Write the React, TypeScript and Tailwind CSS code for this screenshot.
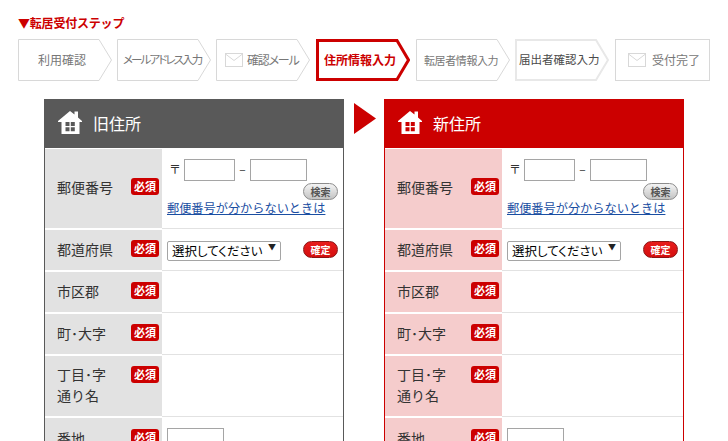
import React from 'react';

const steps = [
  { label: '利用確認', cell: 'w-[99px]', text: 'text-[12px] pl-[20px]' },
  { label: 'メールアドレス入力', cell: 'w-[99px]', text: 'text-[11.5px] pl-[6px] tracking-[-1.9px]' },
  { label: '確認メール', cell: 'w-[100px]', text: 'text-[12px] pl-[9px] tracking-[-1.2px]', mail: true },
  { label: '住所情報入力', cell: 'w-[100px]', text: 'text-[12px] pl-[8px] font-bold', active: true },
  { label: '転居者情報入力', cell: 'w-[99px]', text: 'text-[11px] pl-[8px] tracking-[-0.4px]' },
  { label: '届出者確認入力', cell: 'w-[100px]', text: 'text-[11.5px] pl-[4px] text-[#4a4a4a]', current: true },
];

const MailIcon: React.FC = () => (
  <svg width="18" height="14" viewBox="0 0 18 14" className="mr-[4px] shrink-0">
    <rect x="0.5" y="0.5" width="17" height="13" fill="#fff" stroke="#d8d8d8" />
    <path d="M0.5 1 L9 7.5 L17.5 1" fill="none" stroke="#d8d8d8" />
  </svg>
);

const HomeIcon: React.FC = () => (
  <svg width="24" height="24" viewBox="0 0 24 24" className="shrink-0">
    <path
      fillRule="evenodd"
      fill="#fff"
      d="M12 0 L16.5 3.5 V0.5 H20 V6.5 L24 10 V11 H21.5 V23 H3.5 V11 H0 V10 Z M7.5 11 V15 H11.5 V11 Z M12.8 11 V15 H16.8 V11 Z M7.5 16.2 V20.2 H11.5 V16.2 Z M12.8 16.2 V20.2 H16.8 V16.2 Z"
    />
  </svg>
);

const Step: React.FC<{ step: (typeof steps)[number] }> = ({ step }) => {
  const stroke = step.active ? '#cc0000' : step.current ? '#e8e8e8' : '#d8d8d8';
  const weight = step.active ? 3 : step.current ? 2 : 1;
  const inset = weight / 2;
  return (
    <div className={`${step.cell} shrink-0`}>
      <div className="relative flex h-[42px] w-[94px] items-center">
        <svg width="94" height="42" viewBox="0 0 94 42" className="absolute inset-0">
          <polygon
            points={`${inset},${inset} ${81},${inset} ${94 - inset},21 ${81},${42 - inset} ${inset},${42 - inset}`}
            fill="#fff"
            stroke={stroke}
            strokeWidth={weight}
          />
        </svg>
        <div
          className={`relative flex items-center whitespace-nowrap [font-feature-settings:'palt'] ${step.text} ${
            step.active ? 'text-[#cc0000]' : step.current ? '' : 'text-[#777]'
          }`}
        >
          {step.mail && <MailIcon />}
          {step.label}
        </div>
      </div>
    </div>
  );
};

const Badge: React.FC<{ className?: string }> = ({ className }) => (
  <span
    className={`flex h-[17px] w-[28px] shrink-0 items-center justify-center rounded-[3px] bg-[#cc0000] text-[11px] leading-none font-bold text-white ${className ?? ''}`}
  >
    必須
  </span>
);

const Row: React.FC<{
  label: React.ReactNode;
  labelBg: string;
  height: string;
  badgeTop?: boolean;
  children?: React.ReactNode;
}> = ({ label, labelBg, height, badgeTop, children }) => (
  <div className={`flex ${height}`}>
    <div className={`mb-[2px] flex w-[117px] shrink-0 items-center justify-between pr-[3px] pl-[12px] text-[14px] leading-[21px] text-[#333] ${labelBg}`}>
      <span className="-translate-y-[1px]">{label}</span>
      {badgeTop ? <Badge className="mt-[10px] self-start" /> : <Badge className="-translate-y-[2px]" />}
    </div>
    <div className="mb-px flex-1 border-b border-[#e2e2e2] pr-[5px] pl-[5px]">{children}</div>
  </div>
);

const Panel: React.FC<{ title: string; head: string; border: string; labelBg: string }> = ({ title, head, border, labelBg }) => (
  <div className={`w-[300px] shrink-0 border-x ${border}`}>
    <div className={`-mx-px flex h-[49px] items-center gap-[11px] pb-[2px] pl-[14px] text-[16px] text-white ${head}`}>
      <HomeIcon />
      <span>{title}</span>
    </div>
    <div className="pt-px">
      <Row label="郵便番号" labelBg={labelBg} height="h-[81px]">
        <div className="flex items-center pt-[10px] pl-[2px] text-[12px] text-[#333]">
          <span className="w-[15px] -translate-y-[1px]">〒</span>
          <input className="h-[22px] w-[51px] border border-[#a5a5a5] bg-white" />
          <span className="w-[15px] -translate-y-[1px] text-center">–</span>
          <input className="h-[22px] w-[57px] border border-[#a5a5a5] bg-white" />
        </div>
        <div className="mt-[2px] flex justify-end">
          <button className="flex h-[17px] w-[35px] items-center justify-center rounded-full border border-[#8c8c8c] bg-gradient-to-b from-[#f4f4f4] to-[#c4c4c4] text-[10px] font-bold text-[#555]">
            検索
          </button>
        </div>
        <a className="block text-[12.2px] leading-[16px] whitespace-nowrap text-[#1a4ea2] underline">郵便番号が分からないときは</a>
      </Row>
      <Row label="都道府県" labelBg={labelBg} height="h-[42px]">
        <div className="flex h-full items-center justify-between pb-[2px]">
          <div className="relative">
            <select className="h-[20px] w-[114px] appearance-none rounded-[2px] border border-[#a5a5a5] bg-white pl-[4px] text-[12.5px] text-black [font-feature-settings:'palt']">
              <option>選択してください</option>
            </select>
            <span className="pointer-events-none absolute top-[6px] right-[5px] text-[8px] leading-[8px] text-[#222]">▼</span>
          </div>
          <button className="flex h-[17px] w-[35px] items-center justify-center rounded-full border border-[#8a1414] bg-gradient-to-b from-[#e81c1c] to-[#d40e0e] text-[10px] font-bold text-white">
            確定
          </button>
        </div>
      </Row>
      <Row label="市区郡" labelBg={labelBg} height="h-[42px]" />
      <Row label="町･大字" labelBg={labelBg} height="h-[42px]" />
      <Row
        label={
          <>
            丁目･字
            <br />
            通り名
          </>
        }
        labelBg={labelBg}
        height="h-[62px]"
        badgeTop
      />
      <Row label="番地" labelBg={labelBg} height="h-[44px]">
        <input className="mt-[10px] h-[22px] w-[57px] border border-[#a5a5a5] bg-white" />
      </Row>
    </div>
  </div>
);

export default function App() {
  return (
    <div className="h-[441px] w-[728px] overflow-hidden bg-white font-['Noto_Sans_CJK_JP',sans-serif]">
      <div className="pt-[14px] pl-[18px] text-[12px] leading-[18px] font-bold tracking-[-0.2px] text-[#cc0000]">▼転居受付ステップ</div>
      <div className="mt-[7px] flex pl-[18px]">
        {steps.map((step) => (
          <Step key={step.label} step={step} />
        ))}
        <div className="flex h-[42px] w-[95px] shrink-0 items-center justify-center gap-[2px] border border-[#d8d8d8] pl-[3px] text-[12px] text-[#777]">
          <MailIcon />
          受付完了
        </div>
      </div>
      <div className="mt-[18px] flex pl-[44px]">
        <Panel title="旧住所" head="bg-[#595959]" border="border-[#595959]" labelBg="bg-[#e2e2e2]" />
        <div className="w-[40px] shrink-0 pt-[4px] pl-[10px]">
          <svg width="22" height="31" viewBox="0 0 22 31">
            <polygon points="0,0 22,15.5 0,31" fill="#cc0000" />
          </svg>
        </div>
        <Panel title="新住所" head="bg-[#cc0000]" border="border-[#cc0000]" labelBg="bg-[#f5cccc]" />
      </div>
    </div>
  );
}
